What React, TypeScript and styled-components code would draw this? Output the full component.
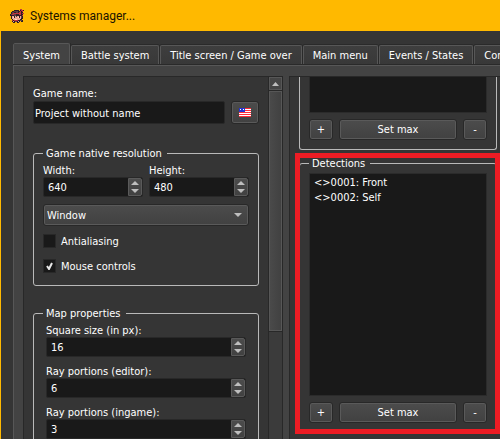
import React, { useId, useState } from "react";
import styled, { createGlobalStyle, css } from "styled-components";

const GlobalStyle = createGlobalStyle`
  *, *::before, *::after { box-sizing: border-box; }
  html, body { margin: 0; background: #353535; overflow: hidden; }
  body, button, input, select {
    font-family: "DejaVu Sans Condensed", "DejaVu Sans", sans-serif;
    font-stretch: condensed;
    font-size: 11px;
    line-height: 14px;
    color: #fff;
  }
`;

const Window = styled.div`
  display: flex;
  flex-direction: column;
  height: 100vh;
  overflow: hidden;
  background: #353535;
  border-left: 1px solid #ffb900;
`;

const TitleBar = styled.header`
  display: flex;
  flex: none;
  align-items: center;
  gap: 6px;
  height: 31px;
  padding-left: 9px;
  background: #ffb900;
`;

const WindowTitle = styled.h1`
  margin: 0;
  font: 400 12px/16px Roboto, "Open Sans", sans-serif;
  color: #1a1300;
`;

const Body = styled.main`
  display: flex;
  flex: 1;
  flex-direction: column;
  min-height: 0;
  padding: 12px 0 0 12px;
`;

const TabBar = styled.div`
  display: flex;
  flex: none;
  align-items: flex-end;
  gap: 1px;
  height: 23px;
  margin-bottom: -1px;
  overflow: hidden;
`;

const Tab = styled.button<{ $active?: boolean }>`
  flex: none;
  height: ${(p) => (p.$active ? 23 : 20)}px;
  align-self: ${(p) => (p.$active ? "flex-end" : "flex-start")};
  margin: ${(p) => (p.$active ? 0 : 2)}px 0 0;
  padding: 1px 9px 0;
  white-space: nowrap;
  border: 1px solid #575757;
  border-bottom: 0;
  border-radius: 2px 2px 0 0;
  background: ${(p) => (p.$active ? "#434343" : "linear-gradient(#3e3e3e, #383838)")};
  box-shadow: 0 0 0 1px #2a2a2a;
`;

const Pane = styled.div`
  display: grid;
  grid-template-columns: minmax(0, 260fr) minmax(0, 211fr);
  flex: 1;
  gap: 6px;
  min-height: 0;
  padding: 10px 0 0 9px;
  background: #434343;
  border: solid #575757;
  border-width: 1px 0 0 1px;
  box-shadow: 0 -1px #2a2a2a;
`;

const LeftPanel = styled.section`
  display: flex;
  min-height: 0;
  overflow: hidden;
  background: #353535;
  border: solid #282828;
  border-width: 1px 1px 0;
`;

const LeftContent = styled.div`
  flex: 1;
  min-width: 0;
  padding: 9px;
`;

const RightPanel = styled.section`
  min-height: 0;
  overflow: hidden;
  padding: 0 3px 0 9px;
  background: #353535;
  border: solid #282828;
  border-width: 1px 0 0 1px;
`;

const Label = styled.label`
  display: block;
  height: 14px;
  line-height: 16px;
  white-space: nowrap;
`;

const field = css`
  background: #191919;
  border: 1px solid #282828;
  border-radius: 2px;
`;

const raised = css`
  background: linear-gradient(#4c4c4c, #414141);
  border: 1px solid #282828;
  border-radius: 3px;
  box-shadow: inset 0 0 0 1px #5a5a5a;
`;

const NameRow = styled.div`
  display: flex;
  gap: 6px;
  margin: 1px 0 22px;
`;

const TextInput = styled.input`
  ${field}
  flex: 1;
  min-width: 0;
  height: 23px;
  padding: 2px 1px 0;
  outline: none;
`;

const Button = styled.button<{ $size?: "flag" | "small" | "wide" }>`
  ${raised}
  display: flex;
  align-items: center;
  justify-content: center;
  height: ${(p) => (p.$size === "flag" ? 23 : 21)}px;
  padding: ${(p) => (p.$size === "flag" ? "0 0 1px" : "1px 0 0")};
  ${(p) =>
    p.$size === "wide"
      ? "flex: 1;"
      : `flex: none; width: ${p.$size === "flag" ? 28 : 24}px;`}
`;

const Group = styled.fieldset`
  min-width: 0;
  margin: 0;
  padding: 3px 9px 0;
  border: 1px solid #b9b9b9;
  border-radius: 3px;
  & + & { margin-top: 20px; }
`;

const Legend = styled.legend`
  height: 14px;
  padding: 0 5px 0 3px;
  line-height: 16px;
`;

const TwoColumns = styled.div`
  display: grid;
  grid-template-columns: repeat(2, minmax(0, 1fr));
  gap: 6px;
`;

const Stack = styled.div`
  display: flex;
  flex-direction: column;
  gap: 7px;
  padding: 0 3px 12px;
`;

const SpinFrame = styled.div`
  ${field}
  display: flex;
  height: 20px;
`;

const SpinInput = styled.input`
  flex: 1;
  min-width: 0;
  padding: 2px 4px 0;
  color: #fff;
  background: none;
  border: 0;
  outline: none;
  appearance: textfield;
  &::-webkit-inner-spin-button { appearance: none; margin: 0; }
`;

const SpinButtons = styled.div`
  display: flex;
  flex: none;
  flex-direction: column;
  width: 14px;
  background: linear-gradient(#4c4c4c, #414141);
  border: 1px solid #5a5a5a;
  border-radius: 0 2px 2px 0;
`;

const SpinButton = styled.button`
  display: flex;
  flex: 1;
  align-items: center;
  justify-content: center;
  min-height: 0;
  padding: 0;
  background: none;
  border: 0;
`;

const SelectFrame = styled.div`
  ${raised}
  display: flex;
  align-items: center;
  height: 22px;
  margin: 7px 0 8px;
  padding-right: 6px;
`;

const Select = styled.select`
  flex: 1;
  min-width: 0;
  height: 20px;
  padding: 1px 3px 0;
  appearance: none;
  background: none;
  border: 0;
  outline: none;
`;

const CheckRow = styled.label`
  display: flex;
  align-items: center;
  gap: 5px;
  height: 14px;
  margin-bottom: 11px;
  line-height: 16px;
  &:last-child { margin-bottom: 12px; }
`;

const CheckBox = styled.input`
  width: 13px;
  height: 14px;
  margin: 0;
  appearance: none;
  background: #191919;
  border: 1px solid #282828;
`;

const CheckCell = styled.span`
  display: grid;
  & > * { grid-area: 1 / 1; place-self: center; }
  & > svg { pointer-events: none; }
`;

const CheckText = styled.span`
  padding-top: 2px;
`;

const ScrollBar = styled.div`
  display: flex;
  flex: none;
  flex-direction: column;
  width: 14px;
  background: #3b3b3b;
  border-left: 1px solid #282828;
`;

const ScrollUp = styled.button`
  display: flex;
  align-items: center;
  justify-content: center;
  height: 13px;
  padding: 0;
  background: #454545;
  border: 1px solid #575757;
`;

const ScrollThumb = styled.div`
  height: 240px;
  margin-top: 1px;
  background: linear-gradient(90deg, #4a4a4a, #414141);
  border: 1px solid #575757;
  box-shadow: 0 0 0 1px #282828;
`;

const UpperGroup = styled.div`
  margin-bottom: 6px;
  padding: 0 9px 9px;
  border: 1px solid #b9b9b9;
  border-top: 0;
  border-radius: 0 0 3px 3px;
`;

const List = styled.ul<{ $tall?: boolean }>`
  min-height: ${(p) => (p.$tall ? 223 : 36)}px;
  margin: 0 0 6px;
  padding: 1px 4px;
  list-style: none;
  line-height: 15px;
  background: #191919;
  border: 1px solid #2b2b2b;
  border-top-width: ${(p) => (p.$tall ? 1 : 0)}px;
`;

const ButtonRow = styled.div`
  display: flex;
  gap: 6px;
`;

const Highlight = styled.div`
  position: relative;
  & ${Group} { padding-bottom: 9px; }
  &::after {
    content: "";
    position: absolute;
    inset: -3px -3px -1px -4px;
    border: 5px solid #ed1c24;
    pointer-events: none;
  }
`;

const Arrow = ({ down, width = 8 }: { down?: boolean; width?: number }) => (
  <svg width={width} height="4" viewBox="0 0 8 4" preserveAspectRatio="none" aria-hidden="true">
    <path d={down ? "M0 0H8L4 4Z" : "M0 4H8L4 0Z"} fill="#bebebe" />
  </svg>
);

const HERO_COLORS: Record<string, string> = {
  k: "#2f1c24",
  d: "#5d4046",
  r: "#c23440",
  s: "#f0a893",
  w: "#ffdfcf",
};

const HERO = [
  "..........rr..",
  "....kkkkk.krrk",
  "..kkddddkkrkr.",
  ".kddkkddkrrkk.",
  ".kdrrrrrrrrkrr",
  "kdrrddkkkrrkk.",
  "kkkkddkkkkkkr.",
  ".kssksdssksdk.",
  ".kswkssswksdk.",
  ".kssssssssskk.",
  "..ksswwssskk..",
  "..rkrrrrkkddk.",
  "..kskddksk.kk.",
  "...kk..kk.....",
];

const HeroIcon = () => (
  <svg width="14" height="14" viewBox="0 0 14 14" shapeRendering="crispEdges" aria-hidden="true">
    {HERO.flatMap((row, y) =>
      [...row].map((c, x) =>
        c === "." ? null : (
          <rect key={`${x}-${y}`} x={x} y={y} width="1" height="1" fill={HERO_COLORS[c]} />
        )
      )
    )}
  </svg>
);

const FlagIcon = () => (
  <svg width="12" height="9" viewBox="0 0 12 9" shapeRendering="crispEdges" aria-hidden="true">
    <rect width="12" height="9" fill="#ffffff" />
    {[0, 2, 4, 6, 8].map((y) => (
      <rect key={y} y={y} width="12" height="1" fill="#ff2a36" />
    ))}
    <rect width="6" height="4" fill="#2634d0" />
    <rect x="1" y="1" width="1" height="1" fill="#ffffff" />
    <rect x="4" y="1" width="1" height="1" fill="#ffffff" />
  </svg>
);

function SpinBox({ label, initial }: { label: string; initial: number }) {
  const id = useId();
  const [value, setValue] = useState(initial);
  return (
    <div>
      <Label htmlFor={id}>{label}</Label>
      <SpinFrame>
        <SpinInput
          id={id}
          type="number"
          value={value}
          onChange={(e) => setValue(Number(e.target.value))}
        />
        <SpinButtons>
          <SpinButton type="button" aria-label="Increase" onClick={() => setValue(value + 1)}>
            <Arrow />
          </SpinButton>
          <SpinButton type="button" aria-label="Decrease" onClick={() => setValue(value - 1)}>
            <Arrow down />
          </SpinButton>
        </SpinButtons>
      </SpinFrame>
    </div>
  );
}

function Check({ label, initial }: { label: string; initial: boolean }) {
  const [on, setOn] = useState(initial);
  return (
    <CheckRow>
      <CheckCell>
        <CheckBox type="checkbox" checked={on} onChange={() => setOn(!on)} />
        {on && (
          <svg width="7" height="8" viewBox="0 0 7 8" aria-hidden="true">
            <path d="M1 4L3 7L6 1" fill="none" stroke="#e8e8e8" strokeWidth="2" />
          </svg>
        )}
      </CheckCell>
      <CheckText>{label}</CheckText>
    </CheckRow>
  );
}

const ListButtons = () => (
  <ButtonRow>
    <Button type="button" $size="small">+</Button>
    <Button type="button" $size="wide">Set max</Button>
    <Button type="button" $size="small">-</Button>
  </ButtonRow>
);

const TABS = [
  "System",
  "Battle system",
  "Title screen / Game over",
  "Main menu",
  "Events / States",
  "Common reactions",
];

export default function App() {
  const [tab, setTab] = useState(0);
  return (
    <>
      <GlobalStyle />
      <Window>
        <TitleBar>
          <HeroIcon />
          <WindowTitle>Systems manager...</WindowTitle>
        </TitleBar>
        <Body>
          <TabBar role="tablist">
            {TABS.map((name, i) => (
              <Tab
                key={name}
                type="button"
                role="tab"
                aria-selected={i === tab}
                $active={i === tab}
                onClick={() => setTab(i)}
              >
                {name}
              </Tab>
            ))}
          </TabBar>
          <Pane>
            <LeftPanel>
              <LeftContent>
                <Label htmlFor="game-name">Game name:</Label>
                <NameRow>
                  <TextInput id="game-name" type="text" defaultValue="Project without name" />
                  <Button type="button" $size="flag" aria-label="Language">
                    <FlagIcon />
                  </Button>
                </NameRow>
                <Group>
                  <Legend>Game native resolution</Legend>
                  <TwoColumns>
                    <SpinBox label="Width:" initial={640} />
                    <SpinBox label="Height:" initial={480} />
                  </TwoColumns>
                  <SelectFrame>
                    <Select aria-label="Screen mode" defaultValue="Window">
                      <option>Window</option>
                      <option>Full screen</option>
                    </Select>
                    <Arrow down />
                  </SelectFrame>
                  <Check label="Antialiasing" initial={false} />
                  <Check label="Mouse controls" initial />
                </Group>
                <Group>
                  <Legend>Map properties</Legend>
                  <Stack>
                    <SpinBox label="Square size (in px):" initial={16} />
                    <SpinBox label="Ray portions (editor):" initial={6} />
                    <SpinBox label="Ray portions (ingame):" initial={3} />
                  </Stack>
                </Group>
              </LeftContent>
              <ScrollBar>
                <ScrollUp type="button" aria-label="Scroll up">
                  <Arrow width={7} />
                </ScrollUp>
                <ScrollThumb />
              </ScrollBar>
            </LeftPanel>
            <RightPanel>
              <UpperGroup>
                <List />
                <ListButtons />
              </UpperGroup>
              <Highlight>
                <Group>
                  <Legend>Detections</Legend>
                  <List $tall>
                    <li>&lt;&gt;0001: Front</li>
                    <li>&lt;&gt;0002: Self</li>
                  </List>
                  <ListButtons />
                </Group>
              </Highlight>
            </RightPanel>
          </Pane>
        </Body>
      </Window>
    </>
  );
}
